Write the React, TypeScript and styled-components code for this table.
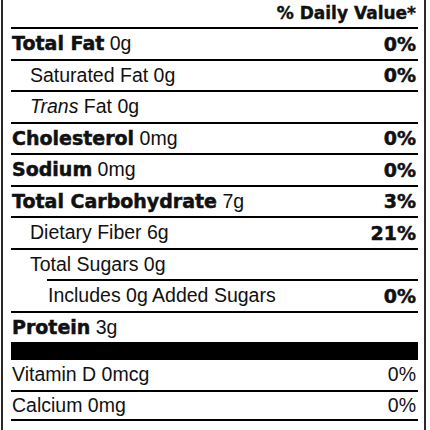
import React from "react";
import styled, { createGlobalStyle } from "styled-components";

const GlobalStyle = createGlobalStyle`
  html, body {
    margin: 0;
    padding: 0;
    background: #fff;
    overflow: hidden;
  }
`;

const Label = styled.section`
  box-sizing: border-box;
  width: 425px;
  height: 430px;
  margin-left: 1px;
  padding: 0 6px 0 8px;
  border-left: 2px solid #2a2a2a;
  border-right: 2px solid #2a2a2a;
  color: #111;
  font-family: "Liberation Sans", Arial, sans-serif;
`;

const Header = styled.div`
  display: flex;
  justify-content: flex-end;
  align-items: center;
  box-sizing: border-box;
  height: 27px;
  padding: 0 2px 2px 0;
  font-family: "DejaVu Sans", sans-serif;
  font-weight: 700;
  font-size: 17px;
  -webkit-text-stroke: 0.4px #111;
`;

const Row = styled.div<{ $indent?: number; $inset?: number; $rule?: number; $last?: boolean }>`
  display: flex;
  align-items: center;
  justify-content: space-between;
  box-sizing: border-box;
  height: ${({ $rule = 2 }) => 29.5 + $rule}px;
  margin-left: ${({ $inset = 0 }) => $inset}px;
  padding: 0 2px 0 ${({ $indent = 0 }) => 1 + $indent}px;
  border-top: ${({ $rule = 2 }) => $rule}px solid #000;
  border-bottom: ${({ $last }) => ($last ? "2px solid #000" : "none")};
  white-space: nowrap;
`;

const Name = styled.span`
  font-size: 19.5px;
`;

const Nutrient = styled.b`
  font-family: "DejaVu Sans", sans-serif;
  font-weight: 700;
  font-size: 19px;
  -webkit-text-stroke: 0.5px #111;
`;

const Percent = styled.span<{ $bold?: boolean }>`
  font-family: ${({ $bold }) => ($bold ? `"DejaVu Sans", sans-serif` : `"Liberation Sans", Arial, sans-serif`)};
  font-weight: ${({ $bold }) => ($bold ? 700 : 400)};
  font-size: ${({ $bold }) => ($bold ? "19px" : "19.5px")};
  -webkit-text-stroke: ${({ $bold }) => ($bold ? "0.5px #111" : "0")};
`;

export default function App() {
  return (
    <>
      <GlobalStyle />
      <Label>
        <Header>% Daily Value*</Header>
        <Row>
          <Name>
            <Nutrient>Total Fat</Nutrient> 0g
          </Name>
          <Percent $bold>0%</Percent>
        </Row>
        <Row $indent={18}>
          <Name>Saturated Fat 0g</Name>
          <Percent $bold>0%</Percent>
        </Row>
        <Row $indent={18}>
          <Name>
            <i>Trans</i> Fat 0g
          </Name>
        </Row>
        <Row>
          <Name>
            <Nutrient>Cholesterol</Nutrient> 0mg
          </Name>
          <Percent $bold>0%</Percent>
        </Row>
        <Row>
          <Name>
            <Nutrient>Sodium</Nutrient> 0mg
          </Name>
          <Percent $bold>0%</Percent>
        </Row>
        <Row>
          <Name>
            <Nutrient>Total Carbohydrate</Nutrient> 7g
          </Name>
          <Percent $bold>3%</Percent>
        </Row>
        <Row $indent={18}>
          <Name>Dietary Fiber 6g</Name>
          <Percent $bold>21%</Percent>
        </Row>
        <Row $indent={18}>
          <Name>Total Sugars 0g</Name>
        </Row>
        <Row $inset={36}>
          <Name>Includes 0g Added Sugars</Name>
          <Percent $bold>0%</Percent>
        </Row>
        <Row>
          <Name>
            <Nutrient>Protein</Nutrient> 3g
          </Name>
        </Row>
        <Row $rule={18}>
          <Name>Vitamin D 0mcg</Name>
          <Percent>0%</Percent>
        </Row>
        <Row $last>
          <Name>Calcium 0mg</Name>
          <Percent>0%</Percent>
        </Row>
      </Label>
    </>
  );
}
